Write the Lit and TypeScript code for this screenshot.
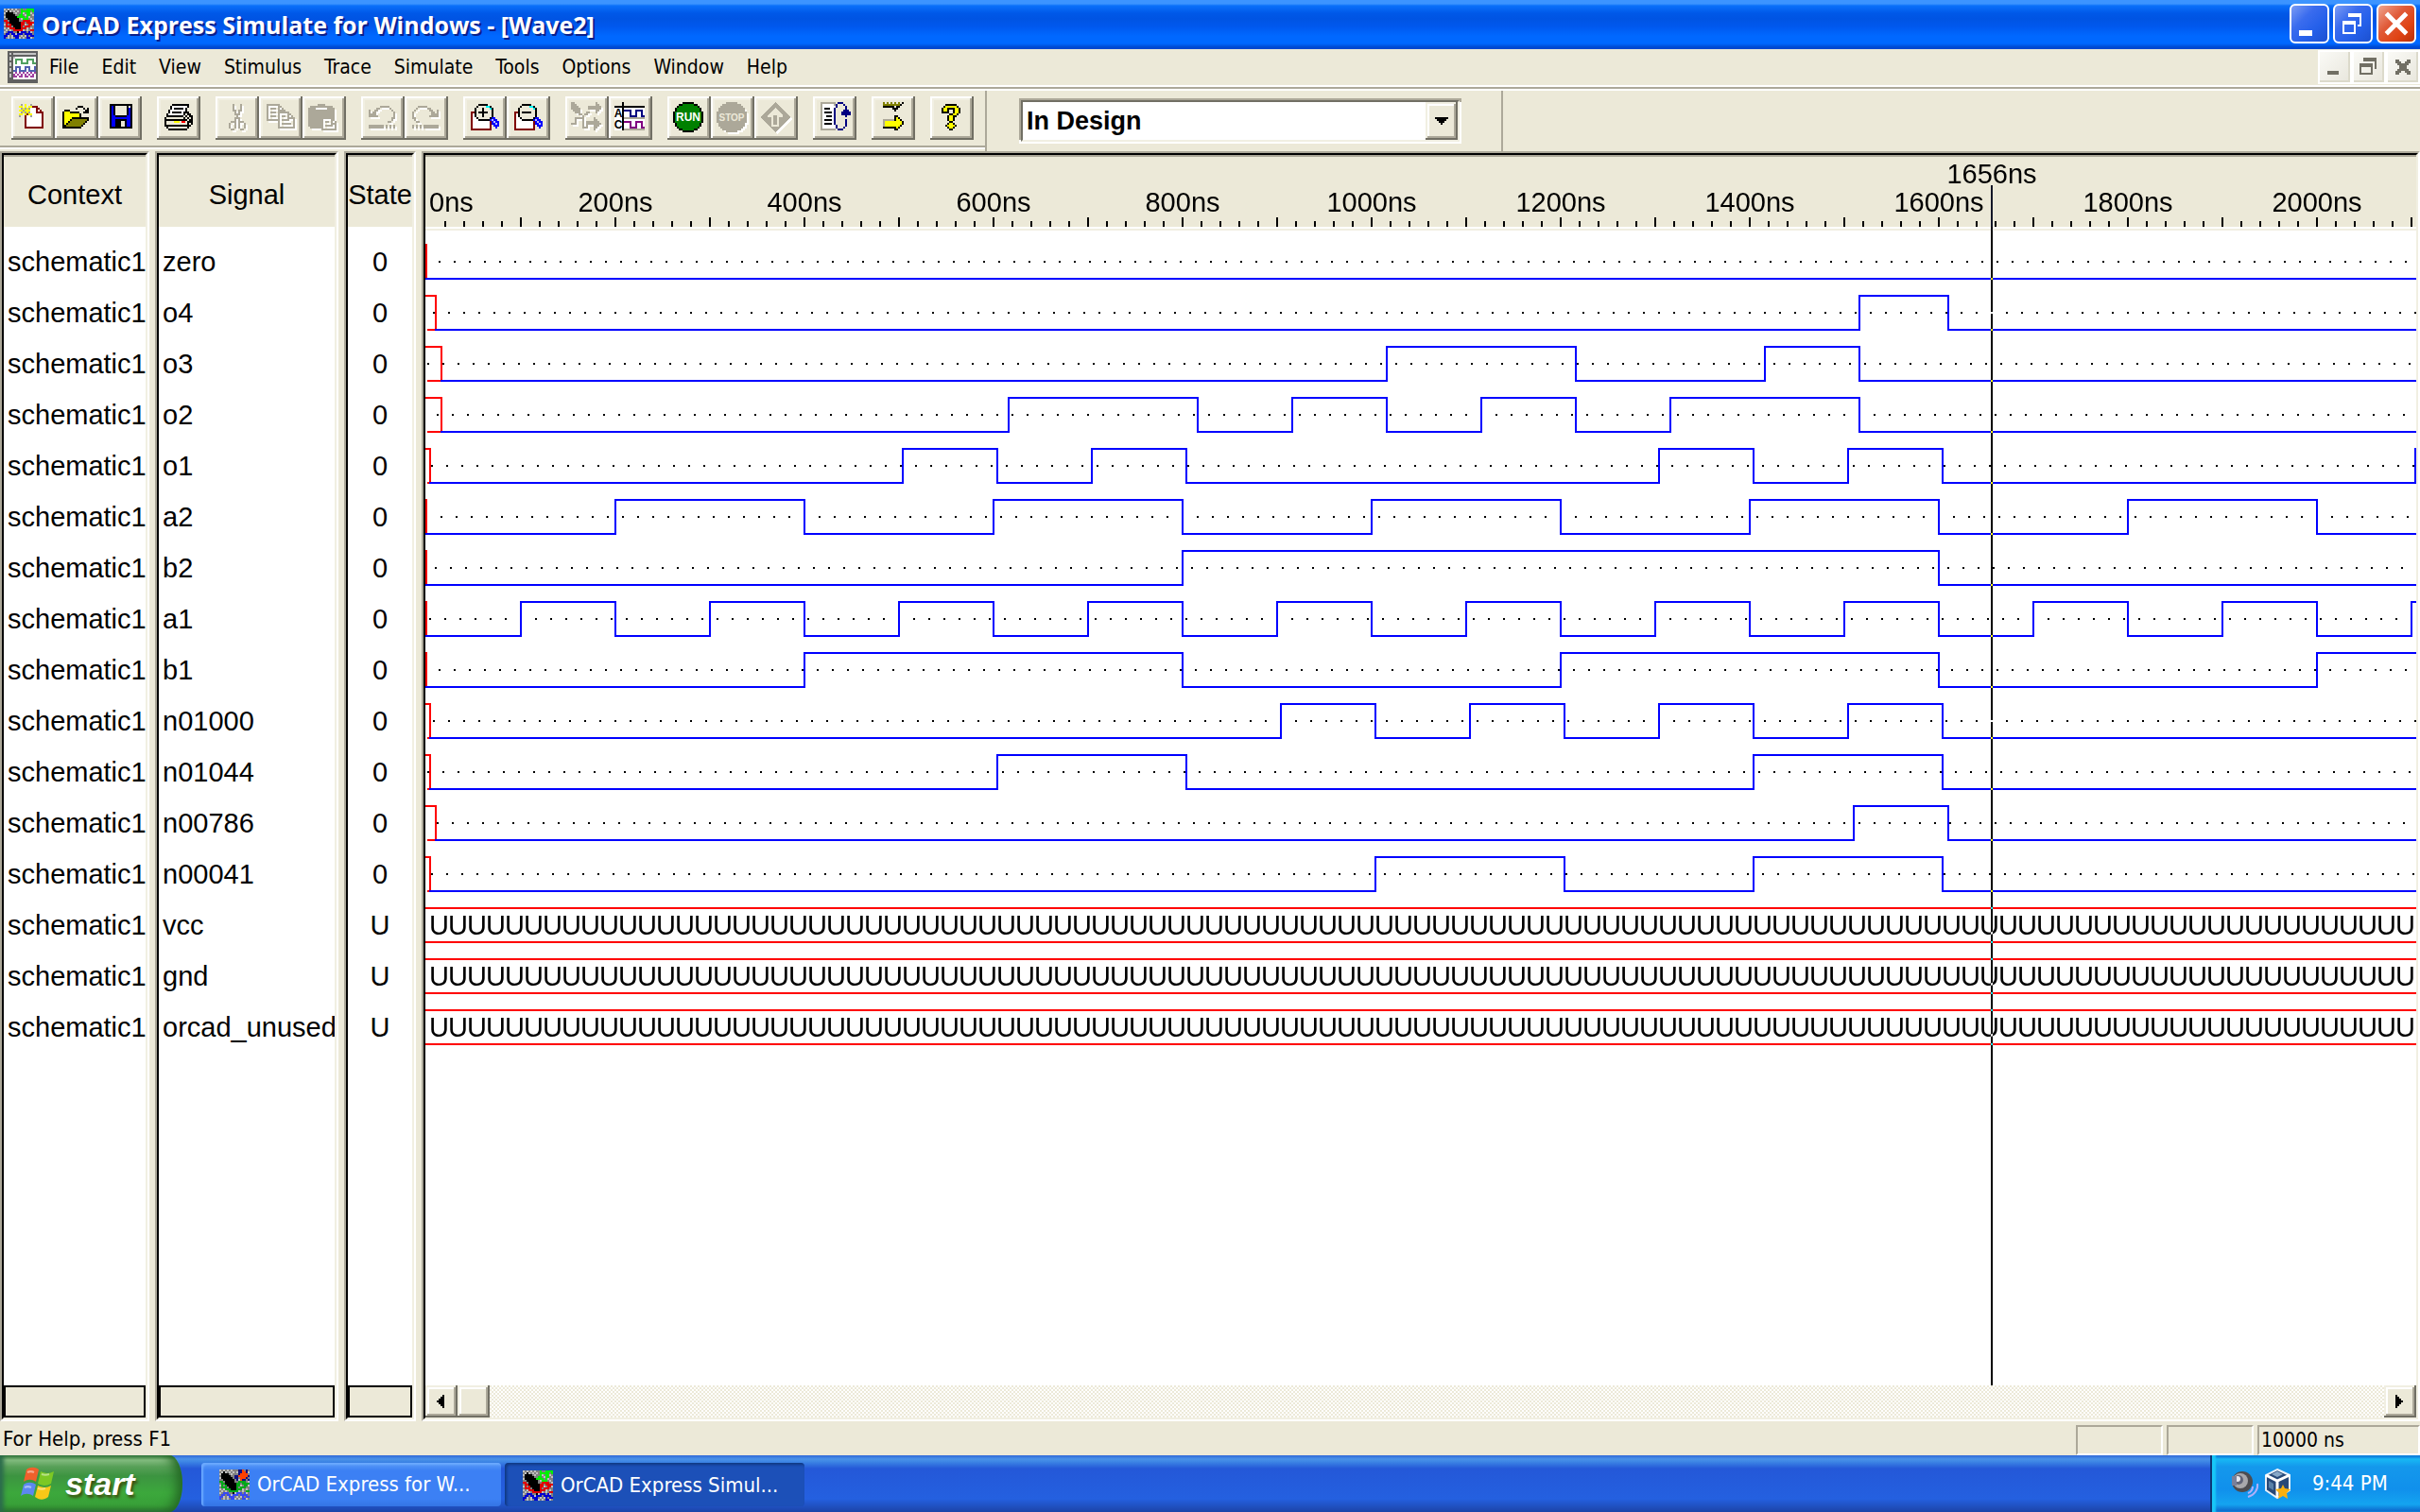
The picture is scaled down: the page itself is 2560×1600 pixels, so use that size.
import { LitElement, html, svg, css } from "lit";
import { customElement } from "lit/decorators.js";
import { classMap } from "lit/directives/class-map.js";

type Palette = Record<string, string>;

const BASE: Palette = {
  K: "#000000", W: "#ffffff", E: "#ece9d8", G: "#aca899", Y: "#ffff00", O: "#808000",
  M: "#800000", B: "#0000ff", N: "#000080", P: "#800080", R: "#ff0000", C: "#00ffff",
  L: "#b8b8ff", g: "#a0a0a0",
};

/** Turns rows of palette letters into horizontal runs of unit squares. */
function pixels(rows: string[], ox: number, oy: number, palette: Palette = BASE) {
  const runs: unknown[] = [];
  rows.forEach((row, y) => {
    let x = 0;
    while (x < row.length) {
      const c = row[x];
      let end = x + 1;
      while (end < row.length && row[end] === c) end++;
      if (palette[c]) {
        runs.push(svg`<rect x=${ox + x} y=${oy + y} width=${end - x} height="1" fill=${palette[c]}></rect>`);
      }
      x = end;
    }
  });
  return svg`${runs}`;
}

/** Disabled look: a white copy one unit down and right, the grey one on top. */
function embossed(rows: string[], ox: number, oy: number) {
  return svg`${pixels(rows, ox + 1, oy + 1, { G: "#ffffff" })}${pixels(rows, ox, oy)}`;
}

const NEW = [
  ".g.Y..g......", "YY.Y.YYMMM...", ".gYgYgWWWMM..", "YYgYYYWWWMWM.", ".gYgYgWWWMMMM",
  "YY.YMYYWWWWWM", "g..MWWgWWWWWM", "...MWWWWWWWWM", "...MWWWWWWWWM", "...MWWWWWWWWM",
  "...MWWWWWWWWM", "...MWWWWWWWWM", "...MMMMMMMMMM",
];
const OPEN = [
  "........KKK...", ".......K...K.K", ".KKK........KK", "KYYYKKKKK..KKK", "KYYYYYYYYK....",
  "KYYYYYYYYK....", "KYYYYKKKKKKKKK", "KYYYKOOOOOOOOK", "KYYKOOOOOOOOK.", "KYKOOOOOOOOK..",
  "KKOOOOOOOOK...", "KKKKKKKKKK....",
];
const SAVE = [
  "KKKKKKKKKKKK", "KBKEEEEEEKWK", "KBKEEEEEEKBK", "KBKEEEEEEKBK", "KBKEEEEEEKBK", "KBKEEEEEEKBK",
  "KBBKKKKKKBBK", "KBBBBBBBBBBK", "KBBKKKKKKBBK", "KBBKKKEEKBBK", "KBBKKKEEKBBK", "KBBKKKEEKBBK",
  "KKKKKKKKKKKK",
];
const PRINT = [
  "....KKKKKKKKK..", "...KWWWWWWWWK..", "...KWKKKKKWK...", "..KWWWWWWWWK...", "..KWKKKKKWKKK..",
  ".KWWWWWWWWK.KK.", ".KKKKKKKKK.K.KK", "KEEEEEEEEEK.K.K", "KKKKKKKKKKKK.KK", "KEEEEYYYERREKKK",
  "KEEEEEEEEEEEK.K", "KKKKKKKKKKKKKK.", ".KEEEEEEEEEEK..", "..KKKKKKKKKK...",
];
const CUT = [
  "..G...G..", "..G...G..", "..G...G..", "..GG.GG..", "...G.G...", "...GGG...", "....G....",
  "...GGG...", "...G.G...", ".GGG.GGG.", "G..G.G..G", "G..G.G..G", "G..G.G..G", ".GG...GG.",
];
const COPY = [
  "GGGGGGG........", "G.....GG.......", "G.GGG.G.G......", "G.....GGGG.....", "G.GGG.GGGGGG...",
  "G.....G....GG..", "G.GGG.G.GG.G.G.", "G.....G....GGGG", "GGGGGGG.GGGG..G", "......G.......G",
  "......G.GGGGG.G", "......G.......G", "......GGGGGGGGG",
];
const PASTE = [
  ".....GGGG......", ".GGGGGGGGGGGG..", "GGGG......GGGG.", "GGGGGGGGGGGGGG.", "GGGGGGGGGGGGGG.",
  "GGGGGGGGGGGGGG.", "GGGGGGGGGGGGGG.", "GGGGGGGGGGGGGG.", "GGGGGGGG....GG.", "GGGGGGGG.GG.G.G",
  "GGGGGGGG....GGG", "GGGGGGGG.GGGG.G", ".GGGGGGG......G", ".......GGGGGGGG",
];
const UNDO = [
  "......GGGGG...", "....GG.....G..", "G..GG.......G.", "G.GG.........G", "GGGG.........G",
  "GGGGG........G", "............GG", "............G.", "..........GG..", "..............",
  "GGGGGGGG.G.G.G", "GGGGGGGG.G.G.G",
];
const REDO = UNDO.map((r) => r.split("").reverse().join(""));
const ZOOM_IN = [
  "....KKKKK......", "...KEEEECCK....", "..KEEEKEEECK...", "..KEEEKEEEEK...", "MMKEKKKKKEEK...",
  "MWKEEEKEEEEK...", "MWKEEEKEEEEK...", "MWWKEEEEEEKBB..", "MWWWKKKKKKBLBB.", "MWWWWWWWWWMBLBB",
  "MWWWWWWWWWMBBLB", "MWWWWWWWWWM.BBB", "MWWWWWWWWWM..B.", "MMMMMMMMMMM....",
];
const ZOOM_OUT = ZOOM_IN.map((r, i) => (i === 2 || i === 3 || i === 5 || i === 6 ? r.slice(0, 6) + "E" + r.slice(7) : r));
const STEP = [
  "GG...........G..", "GGG..........GG.", "GGGG.....GGGGGGG", "GGGGG....GGGGGGG", ".GGGG........GG.",
  "..GGG...GG...G..", "....GG.GG.......", "......G.........", "..GGGGG.....G...", "..G...G.....GG..",
  "..G...G.GGGGGGG.", "GGG...G.GGGGGGGG", "......G.G...GGG.", "......GGG...GG..", "............G...",
];
const WAVES = [
  "....K...........", "....K...........", "KKKKKKKKKKKKKKKK", "WWWWKWWWWWWWWWWW", "WWWWKNNNNWWNNNNW",
  "WWWWKWWWNWWNWWNW", "WWWWKWWWNWWNWWNW", "WWWWKWWWNNNNWWNN", "WWWWKGGGGGGGGGGG", "WWWWKWWWWWWWWWWW",
  "WWWWKPPPPWWPPPPW", "WWWWKWWWPWWPWWPW", "WWWWKWWWPWWPWWPW", "WWWWKWWWPPPPWWPP", "WWWWKGGGGGGGGGGG",
];
const LOOP = [
  "GGGGGGGG.NNN....", "GWWWWWWGN...N...", "GWWWWWWWN....N..", "GWKKKWWN.....N..", "GWWWWWWN....NNN.",
  "GWKKKKWN...NNNNN", "GWWWWWWN...NNNNN", "GWWKKKWN.....N..", "GWWWWWWN........", "GWKKKKWN.....N..",
  "GWWWWWWN.....N..", "GWKKKKWN.....N..", "GWWWWWWWN....N..", "GWWWWWWWN...N...", "GGGGGGGG.NNN....",
];
const GOTO = [
  "O.O.O.O.O.K", "OOOOOOOOOK.", "KKKKKK.KK..", ".....KKK...", "......K....", "...........",
  "...........", "......KK...", "......KYK..", "GGGGGGKYYK.", "GYYYYYYYYYK", "GYYYYYYYYYK",
  "GYYYYYYYYK.", "KKKKKKKYK..", "......KK...",
];
const HELP = [
  "..KKKKKK..", ".KYYYYYYK.", "KYYKKKKYYK", "KYYK..KYYK", "KKKK..KYYK", "....KKYYK.", "...KYYKK..",
  "...KYYK...", "...KYYK...", "....KK....", "...KYYK...", "..KYYYYK..", "...KYYK...", "....KK....",
];
const APP = [
  "LGLGLGLGGNGGNNNN", "GLKLGLGLGNNNNNGN", "LKKKKGLGGNLGNNLG", "GKKKKKGGNNGLNNGL", "LKKKKKKNNNNGNLGG",
  "GGKKKKKKGLNNNGLG", "RRGKKKKKGGRRRRGL", "GRRKKKKKKRRGRRRR", "LRGRKKKKKRRLGRRL", "GRRRGKKKKRGRRRGG",
  "LGLRRRKKKRRRLGLG", "GLGLGRRRRRLGLGRR", "LGBBBGGKLBBBGBLG", "GBBGBBLBBBGBBBBG", "BBLGLBBBGLGLBGBB",
  "BGLGLGBBLGLGBBLG",
];
const APP_STAR = [
  "LGLGLGLGGGVVNGVG", "GLKLGLGLGLVVNNVL", "LKKKKGLGGGVNNNNG", "GKKKKKGGVVNNNNNV", "LKKKKKKGVVGNNNVG",
  "GGKKKKKKGVLNVVGV", ...APP.slice(6),
];
const DOC = [
  "DDDDDDDDDDDDDDDD", "DLDLLLLLLLLLLLLD", "DDDDDDDDDDDDDDDD", "DLDLWWWWWWWWWWWD", "DLDWNNNNWWNNNNWD",
  "DDDWNWWNWWNWWNWD", "DLDWNWWNNNNWWNND", "DLDWWWWWWWWWWWWD", "DDDWBBBWWBBBWWBD", "DLDWBWBWWBWBWWBD",
  "DLDBBWBBBBWBBBBD", "DDDWPWPWPWPWPWPD", "DLDPWPWPWPWPWPWD", "DLDPPWPPWPPWPPWD", "DDDWWWWWWWWWWWWD",
  "DDDDDDDDDDDDDDDD", "DDDDDDDDDDDDDDDD",
];
const SIM_COLORS: Palette = { L: "#c0c0c0", G: "#808080", K: "#000000", N: "#00f000", R: "#e00000", B: "#0000d0" };
const EXP_COLORS: Palette = { L: "#c0c0c0", G: "#808080", K: "#000000", N: "#ff4000", V: "#101080", R: "#00a818", B: "#3848f0" };
const DOC_COLORS: Palette = { D: "#606060", L: "#c4c4c4", W: "#ffffff", N: "#50a060", B: "#5060b0", P: "#a040a0" };

const appIcon = (art: string[], colors: Palette) =>
  html`<svg class="app-icon" viewBox="0 0 16 16" aria-hidden="true">${pixels(art, 0, 0, colors)}</svg>`;

interface Tool { label: string; art: unknown; off?: boolean }

const TOOL_GROUPS: Tool[][] = [
  [
    { label: "New", art: pixels(NEW, 4, 4) },
    { label: "Open", art: pixels(OPEN, 4, 5) },
    { label: "Save", art: pixels(SAVE, 6, 4) },
  ],
  [{ label: "Print", art: pixels(PRINT, 4, 4) }],
  [
    { label: "Cut", art: embossed(CUT, 7, 4), off: true },
    { label: "Copy", art: embossed(COPY, 4, 4), off: true },
    { label: "Paste", art: embossed(PASTE, 3, 4), off: true },
  ],
  [
    { label: "Undo", art: embossed(UNDO, 4, 5), off: true },
    { label: "Redo", art: embossed(REDO, 4, 5), off: true },
  ],
  [
    { label: "Zoom in", art: pixels(ZOOM_IN, 4, 4) },
    { label: "Zoom out", art: pixels(ZOOM_OUT, 4, 4) },
  ],
  [
    { label: "Stimulus", art: embossed(STEP, 3, 3), off: true },
    {
      label: "Waveform",
      art: svg`${pixels(WAVES, 3, 3)}<text class="tiny" x="5" y="11" text-anchor="middle">A</text><text class="tiny" x="5" y="17" text-anchor="middle">C</text>`,
    },
  ],
  [
    {
      label: "Run",
      art: svg`<path d="M8 3h6v1h2v1h1v1h1v2h1v6h-1v2h-1v1h-1v1h-2v1H8v-1H6v-1H5v-1H4v-2H3V8h1V6h1V5h1V4h2z" fill="#000"></path>
        <path d="M8 4h6v1h2v1h1v2h1v6h-1v2h-1v1h-2v1H8v-1H6v-1H5v-2H4V8h1V6h1V5h2z" fill="#008000"></path>
        <text class="tiny light" x="11" y="13" text-anchor="middle">RUN</text>`,
    },
    {
      label: "Stop",
      art: svg`<path d="M9 4h6v1h2v1h1v1h1v2h1v6h-1v2h-1v1h-1v1h-2v1H9v-1H7v-1H6v-1H5v-2H4V9h1V7h1V6h1V5h2z" fill="#fff"></path>
        <path d="M8 3h6v1h2v1h1v1h1v2h1v6h-1v2h-1v1h-1v1h-2v1H8v-1H6v-1H5v-1H4v-2H3V8h1V6h1V5h1V4h2z" fill="#aca899"></path>
        <text class="tiny light stop" x="11" y="13" text-anchor="middle">STOP</text>`,
      off: true,
    },
    {
      label: "Restart",
      art: svg`<path d="M12 4l8 8-8 8-8-8z" fill="#fff"></path><path d="M11 3l8 8-8 8-8-8z" fill="#aca899"></path>
        <path d="M11 6l4 4v1h-2v5H9v-5H7v-1z" fill="#ece9d8"></path><path d="M10 10h2v5h-2z" fill="#aca899"></path>`,
      off: true,
    },
  ],
  [{ label: "Restore", art: pixels(LOOP, 4, 3) }],
  [{ label: "Go to time", art: pixels(GOTO, 6, 3) }],
  [{ label: "Help", art: pixels(HELP, 6, 4) }],
];

const MENUS = ["File", "Edit", "View", "Stimulus", "Trace", "Simulate", "Tools", "Options", "Window", "Help"];

interface Signal { name: string; state: string; known?: number; edges?: number[] }

const every = (step: number, last: number) => Array.from({ length: Math.floor(last / step) }, (_, i) => (i + 1) * step);

/** `known` is the time in ns at which a trace leaves the undefined state. */
const SIGNALS: Signal[] = [
  { name: "zero", state: "0", known: 0, edges: [] },
  { name: "o4", state: "0", known: 10, edges: [1516, 1610] },
  { name: "o3", state: "0", known: 16, edges: [1016, 1216, 1416, 1516] },
  { name: "o2", state: "0", known: 16, edges: [616, 816, 916, 1016, 1116, 1216, 1316, 1516] },
  { name: "o1", state: "0", known: 4, edges: [504, 604, 704, 804, 1304, 1404, 1504, 1604, 2104] },
  { name: "a2", state: "0", known: 0, edges: every(200, 2000) },
  { name: "b2", state: "0", known: 0, edges: [800, 1600] },
  { name: "a1", state: "0", known: 0, edges: every(100, 2100) },
  { name: "b1", state: "0", known: 0, edges: [400, 800, 1200, 1600, 2000] },
  { name: "n01000", state: "0", known: 4, edges: [904, 1004, 1104, 1204, 1304, 1404, 1504, 1604] },
  { name: "n01044", state: "0", known: 4, edges: [604, 804, 1404, 1604] },
  { name: "n00786", state: "0", known: 10, edges: [1510, 1610] },
  { name: "n00041", state: "0", known: 4, edges: [1004, 1204, 1404, 1604] },
  { name: "vcc", state: "U" },
  { name: "gnd", state: "U" },
  { name: "orcad_unused", state: "U" },
];

const SPAN = 2200;
const CURSOR = 1656;

@customElement("wave-chart")
class WaveChart extends LitElement {
  static styles = css`
    :host { display: flex; flex: 1; flex-direction: column; position: relative; isolation: isolate; overflow: hidden; background: #fff; font: 29px "Liberation Sans", sans-serif; color: #000; }
    .ruler { display: block; flex: none; width: 100%; height: 76px; background: #ece9d8; box-shadow: inset 0 2px #aca899; border-bottom: 2px solid #fff; }
    .rows { display: flex; flex-direction: column; border-top: 2px solid #f1efe2; padding-top: 6px; }
    .trace { display: block; width: 100%; height: 54px; }
    .unknown { display: flex; box-sizing: border-box; height: 38px; margin: 8px 0; padding-left: 4px; border: solid #f00; border-width: 2px 0; line-height: 34px; overflow: hidden; }
    .u { flex: none; width: 20px; text-align: center; }
    .cursor { position: absolute; top: 32px; bottom: 0; width: 2px; background: #fff; mix-blend-mode: difference; }
    .time { position: absolute; top: 4px; line-height: 32px; transform: translateX(-50%); }
  `;

  private trace(s: Signal, row: number) {
    const known = s.known ?? 0;
    let level = 45;
    let d = `M${known} 45`;
    for (const t of s.edges ?? []) {
      level = level === 45 ? 9 : 45;
      d += `H${t + 1}V${level}`;
    }
    d += `H${SPAN}`;
    const phase = (14 + 10 * row) % 16;
    return html`<svg class="trace" shape-rendering="crispEdges" role="img" aria-label=${s.name}>
      <path d="M${phase} 27H${SPAN}" stroke="#000" stroke-width="2" stroke-dasharray="2 14"></path>
      <path d="M0 9H${known + 1}V46M2 45H${known + 1}" fill="none" stroke="#f00" stroke-width="2"></path>
      <path d=${d} fill="none" stroke="#00f" stroke-width="2"></path>
    </svg>`;
  }

  render() {
    const ticks = every(20, SPAN).map((t) => `M${t + 1} ${t % 100 ? 70 : 66}V76`).join("");
    return html`
      <svg class="ruler" shape-rendering="crispEdges" role="img" aria-label="Time">
        <path d=${ticks} stroke="#000" stroke-width="2"></path>
        <text x="4" y="60">0ns</text>
        ${every(200, 2000).map((t) => svg`<text x=${t + 1} y="60" text-anchor="middle">${t}ns</text>`)}
      </svg>
      <div class="rows">
        ${SIGNALS.map((s, i) => s.edges
          ? this.trace(s, i)
          : html`<div class="unknown">${Array.from({ length: 106 }, () => html`<span class="u">U</span>`)}</div>`)}
      </div>
      <span class="time" style="left:${CURSOR + 1}px">${CURSOR}ns</span>
      <div class="cursor" style="left:${CURSOR}px"></div>
    `;
  }
}

@customElement("app-root")
class AppRoot extends LitElement {
  static styles = css`
    :host { display: flex; flex-direction: column; min-height: 100vh; background: #ece9d8; color: #000; font: 21px/28px "DejaVu Sans Condensed", "DejaVu Sans", sans-serif; }
    button, select, a { font: inherit; color: inherit; }
    button { margin: 0; padding: 0; border: 0; background: none; }
    svg { display: block; shape-rendering: crispEdges; }
    .smooth { shape-rendering: auto; }
    .app-icon { flex: none; width: 32px; height: 32px; }

    .title { display: flex; align-items: center; gap: 4px; box-sizing: border-box; height: 52px; padding: 0 4px 2px; background: linear-gradient(#3c94ff 0, #3c94ff 4px, #0a70fa 6px, #0058e8 14px, #0054e3 20px, #0058ee 28px, #0068ff 38px, #0068ff 46px, #0048d0 50px); }
    .title h1 { flex: 1; margin: 0 0 0 4px; padding-top: 2px; font: bold 25px/40px "Open Sans", sans-serif; color: #fff; text-shadow: 2px 2px #0a1f8c; white-space: nowrap; }
    .caption { width: 42px; height: 42px; box-sizing: border-box; border: 2px solid #fff; border-radius: 6px; background: linear-gradient(135deg, #7c9cf4 0, #3a6cee 35%, #2560ea 65%, #1c50d0 100%); }
    .caption.close { background: linear-gradient(135deg, #f0a48e 0, #e05a38 40%, #e04414 70%, #b83008 100%); }

    .menu { display: flex; align-items: center; height: 38px; padding-left: 8px; border-bottom: 2px solid #fff; }
    .menu nav { display: flex; flex: 1; }
    .menu a { padding: 0 12px; text-decoration: none; }
    .doc-icon { width: 32px; height: 34px; }
    .mdi { width: 36px; height: 36px; box-sizing: border-box; border: 2px solid #fff; background: linear-gradient(135deg, #fafaf6, #e8e6dc); box-shadow: inset -2px -2px #dcdacb; }

    .bars { display: flex; align-items: flex-start; height: 66px; border-top: 2px solid #aca899; box-shadow: inset 0 2px #fff; }
    .tools { display: flex; gap: 16px; box-sizing: border-box; height: 64px; padding: 8px 12px; border-bottom: 2px solid #fff; box-shadow: inset 0 2px #fff, inset 0 -2px #aca899; }
    .group { display: flex; }
    .tool { width: 46px; height: 46px; box-shadow: inset -2px -2px #716f64, inset 2px 2px #fff, inset -4px -4px #aca899, inset 4px 4px #f1efe2; }
    .tool svg { width: 46px; height: 46px; }
    .tiny { font: bold 6px "Liberation Sans Narrow", "Liberation Sans", sans-serif; fill: #000; }
    .light { fill: #fff; }
    .stop { font-size: 5px; fill: #ece9d8; }
    .pick { box-sizing: border-box; width: 548px; height: 64px; margin-top: 2px; padding: 8px 34px 0; border: solid #aca899; border-width: 0 2px; }
    .field { display: grid; height: 40px; margin: 2px; border: 2px solid; border-color: #716f64 #f1efe2 #f1efe2 #716f64; box-shadow: -2px -2px #aca899, 2px 2px #fff, 2px -2px #aca899, -2px 2px #fff; width: 460px; }
    .field select { grid-area: 1 / 1; appearance: none; width: 100%; height: 40px; margin: 0; padding: 0 40px 0 4px; border: 0; border-radius: 0; background: #fff; font: bold 27px "Liberation Sans", sans-serif; }
    .drop { grid-area: 1 / 1; justify-self: end; width: 34px; height: 40px; pointer-events: none; }
    .raised { display: grid; place-items: center; background: #ece9d8; box-shadow: inset -2px -2px #716f64, inset 2px 2px #f1efe2, inset -4px -4px #aca899, inset 4px 4px #fff; }

    .work { display: flex; flex: 1; gap: 6px; }
    .pane { display: flex; box-sizing: border-box; border: 2px solid; border-color: #aca899 #fff #fff #aca899; }
    .inner { display: flex; flex: 1; flex-direction: column; min-width: 0; border: 2px solid; border-color: #000 #f1efe2 #f1efe2 #000; background: #fff; }
    .context { width: 158px; }
    .signal { width: 194px; }
    .state { width: 76px; }
    .wave { flex: 1; min-width: 0; }
    table { width: 100%; table-layout: fixed; border-spacing: 0; font: 29px/54px "Liberation Sans", sans-serif; }
    th { box-sizing: border-box; height: 78px; padding: 6px 0 0; background: #ece9d8; box-shadow: inset 0 2px #aca899, inset 0 -2px #fff; font-weight: normal; white-space: nowrap; }
    td { padding: 0 0 0 4px; overflow: hidden; white-space: nowrap; }
    tbody tr:first-child td { padding-top: 8px; }
    .state td { padding-left: 0; text-align: center; }
    .foot { height: 30px; margin-top: auto; border: 2px solid #000; background: #ece9d8; }
    .scroll { display: flex; height: 34px; background: repeating-conic-gradient(#fff 0 25%, #ece9d8 0 50%) 0 0 / 4px 4px; }
    .cell { box-sizing: border-box; width: 34px; height: 34px; padding-right: 2px; }
    .track { flex: 1; }

    .status { display: flex; gap: 4px; box-sizing: border-box; height: 36px; padding: 4px 0 0 3px; line-height: 30px; }
    .status p { flex: 1; margin: 0; font-size: 22px; }
    .slot { box-sizing: border-box; width: 92px; padding-left: 2px; border: 2px solid; border-color: #aca899 #fff #fff #aca899; line-height: 28px; white-space: nowrap; }
    .slot.time { width: 172px; }

    .taskbar { display: flex; align-items: stretch; height: 60px; color: #fff; font-size: 22px; background: linear-gradient(#3068d8 0, #4a92e8 4px, #3c84e4 7px, #2458d8 14px, #2460e0 46px, #2050c0 54px, #1c44a8 100%); }
    .start { display: flex; align-items: center; gap: 9px; box-sizing: border-box; width: 193px; padding-left: 20px; border-radius: 0 14px 14px 0 / 0 30px 30px 0; background: linear-gradient(#388038 0, #84bc80 5px, #58a058 12px, #3c9440 22px, #3ca83c 40px, #38a038 52px, #2c7a2c 100%); box-shadow: inset -12px 0 12px -6px #246824, inset 4px 0 4px #2c6c4c; font: italic bold 34px/56px "Liberation Sans", sans-serif; color: #fff; text-shadow: 2px 3px 3px #3c5010; }
    .flag { width: 40px; height: 40px; }
    .tasks { display: flex; flex: 1; gap: 4px; padding: 8px 0 6px 20px; }
    .task { display: flex; align-items: center; gap: 8px; box-sizing: border-box; width: 317px; padding-left: 19px; border-radius: 4px; background: linear-gradient(#5c9cf8 0, #3c80f4 8px, #3c80f4 38px, #3474e4 100%); box-shadow: inset 2px 2px 2px #6caaff; white-space: nowrap; }
    .task.on { padding-top: 2px; background: #1c50b8; box-shadow: inset 2px 2px 3px #103880; }
    .tray { display: flex; align-items: center; box-sizing: border-box; width: 222px; padding-left: 18px; border-left: 2px solid #0c3878; background: linear-gradient(#0c60d0 0, #18b8f4 4px, #1498ec 12px, #1090ec 36px, #14a4f0 52px, #0c60c8 100%); box-shadow: inset 4px 0 2px #18c8f8; }
    .tray .volume { width: 36px; height: 36px; }
    .tray .box { width: 30px; height: 34px; }
    .clock { margin-left: 22px; white-space: nowrap; }
  `;

  private pane(kind: string, heading: string, value: (s: Signal) => string) {
    return html`<section class="pane ${kind}"><div class="inner">
      <table>
        <thead><tr><th scope="col">${heading}</th></tr></thead>
        <tbody>${SIGNALS.map((s) => html`<tr><td>${value(s)}</td></tr>`)}</tbody>
      </table>
      <div class="foot"></div>
    </div></section>`;
  }

  render() {
    return html`
      <header class="title">
        ${appIcon(APP, SIM_COLORS)}
        <h1>OrCAD Express Simulate for Windows - [Wave2]</h1>
        <button class="caption" aria-label="Minimize"><svg viewBox="0 0 19 19"><path d="M4 13h7v3H4z" fill="#fff"></path></svg></button>
        <button class="caption" aria-label="Restore"><svg viewBox="0 0 19 19"><path d="M7 4h7v7h-2v-1h1V6H7zM4 8h7v7H4zM5 10v4h5v-4z" fill="#fff" fill-rule="evenodd"></path></svg></button>
        <button class="caption close" aria-label="Close"><svg class="smooth" viewBox="0 0 19 19"><path d="M5 5l9 9M14 5l-9 9" stroke="#fff" stroke-width="2.4" stroke-linecap="square"></path></svg></button>
      </header>
      <div class="menu">
        <svg class="doc-icon" viewBox="0 0 16 17" aria-hidden="true">${pixels(DOC, 0, 0, DOC_COLORS)}</svg>
        <nav>${MENUS.map((m) => html`<a href="#">${m}</a>`)}</nav>
        <button class="mdi" aria-label="Minimize document"><svg viewBox="0 0 16 16"><path d="M4 10h6v2H4z" fill="#716f64"></path></svg></button>
        <button class="mdi" aria-label="Restore document"><svg viewBox="0 0 16 16"><path d="M5 3h7v6h-1V5H5zM3 6h7v6H3zM4 8v3h5V8z" fill="#716f64" fill-rule="evenodd"></path></svg></button>
        <button class="mdi" aria-label="Close document"><svg viewBox="0 0 16 16"><path d="M4 4h2v1h1v1h2V5h1V4h2v2h-1v1h-1v2h1v1h1v2h-2v-1H9v-1H7v1H6v1H4v-2h1V9h1V7H5V6H4z" fill="#716f64"></path></svg></button>
      </div>
      <div class="bars">
        <div class="tools" role="toolbar">
          ${TOOL_GROUPS.map((g) => html`<div class="group">${g.map((t) => html`
            <button class="tool" aria-label=${t.label} ?disabled=${!!t.off}><svg viewBox="0 0 23 23">${t.art}</svg></button>`)}</div>`)}
        </div>
        <div class="pick">
          <div class="field">
            <select aria-label="Simulation source"><option>In Design</option></select>
            <span class="drop raised"><svg width="14" height="8" viewBox="0 0 7 4"><path d="M0 0h7v1H6v1H5v1H4v1H3V3H2V2H1V1H0z"></path></svg></span>
          </div>
        </div>
      </div>
      <main class="work">
        ${this.pane("context", "Context", () => "schematic1")}
        ${this.pane("signal", "Signal", (s) => s.name)}
        ${this.pane("state", "State", (s) => s.state)}
        <section class="pane wave"><div class="inner">
          <wave-chart></wave-chart>
          <div class="scroll">
            <button class="cell raised" aria-label="Scroll left"><svg width="8" height="14" viewBox="0 0 4 7"><path d="M4 0v7H3V6H2V5H1V4H0V3h1V2h1V1h1V0z"></path></svg></button>
            <span class="cell raised"></span>
            <span class="track"></span>
            <button class="cell raised" aria-label="Scroll right"><svg width="8" height="14" viewBox="0 0 4 7"><path d="M0 0v7h1V6h1V5h1V4h1V3H3V2H2V1H1V0z"></path></svg></button>
          </div>
        </div></section>
      </main>
      <div class="status">
        <p>For Help, press F1</p>
        <span class="slot"></span><span class="slot"></span><span class="slot time">10000 ns</span>
      </div>
      <footer class="taskbar">
        <button class="start">
          <svg class="flag smooth" viewBox="0 0 40 40" aria-hidden="true">
            <path d="M8 5c4-3 9-3 13 0l-3 13c-4-3-9-3-13 0z" fill="#f0602c"></path>
            <path d="M23 7c4 2 9 3 14 0l-3 13c-5 3-10 2-14 0z" fill="#7cc824"></path>
            <path d="M5 21c4-3 9-3 13 0l-3 12c-4-3-9-3-13 0z" fill="#5c88f0"></path>
            <path d="M20 22c4 2 9 3 14 0l-3 12c-5 4-10 3-14 0z" fill="#f8c818"></path>
            <path d="M9 8c2-1 5-1 7 0M24 10c3 1 5 1 8 0M6 24c2-1 5-1 7 0M20 25c3 1 5 1 8 0" fill="none" stroke="#fff" stroke-opacity=".45" stroke-width="2"></path>
          </svg>
          <span>start</span>
        </button>
        <div class="tasks">
          ${[
            { text: "OrCAD Express for W...", art: APP_STAR, colors: EXP_COLORS, on: false },
            { text: "OrCAD Express Simul...", art: APP, colors: SIM_COLORS, on: true },
          ].map((t) => html`<button class=${classMap({ task: true, on: t.on })}>${appIcon(t.art, t.colors)}<span>${t.text}</span></button>`)}
        </div>
        <div class="tray">
          <svg class="volume smooth" viewBox="0 0 36 36" aria-hidden="true">
            <circle cx="14" cy="16" r="11" fill="#4c4c50"></circle><circle cx="12" cy="15" r="8" fill="#a8a8ac"></circle>
            <circle cx="10" cy="14" r="5" fill="#606478"></circle><circle cx="9" cy="13" r="3" fill="#e8e8f0"></circle>
            <path d="M3 10h5v10H3z" fill="#78809c"></path>
            <path d="M30 18c1 6-3 12-10 14M25 21c0 4-2 6-5 7" fill="none" stroke="#b0b0f8" stroke-width="2"></path>
          </svg>
          <svg class="box smooth" viewBox="0 0 30 34" aria-hidden="true">
            <path d="M15 2l13 6v16l-13 8-12-8V8z" fill="#284878" stroke="#e8f0f8" stroke-width="2"></path>
            <path d="M3 8l12 6 13-6M15 14v17" fill="none" stroke="#fff" stroke-width="3"></path>
            <path d="M9 7l6-3 6 3-6 3z" fill="#88a8c8"></path>
            <path d="M6 14l5 3v7l-5-3z" fill="#5880a8"></path>
            <path d="M21 18l2 4 6 1-4 4 1 6-5-3-5 3 1-6-4-4 6-1z" fill="#f8b010"></path>
          </svg>
          <span class="clock">9:44 PM</span>
        </div>
      </footer>
    `;
  }
}
